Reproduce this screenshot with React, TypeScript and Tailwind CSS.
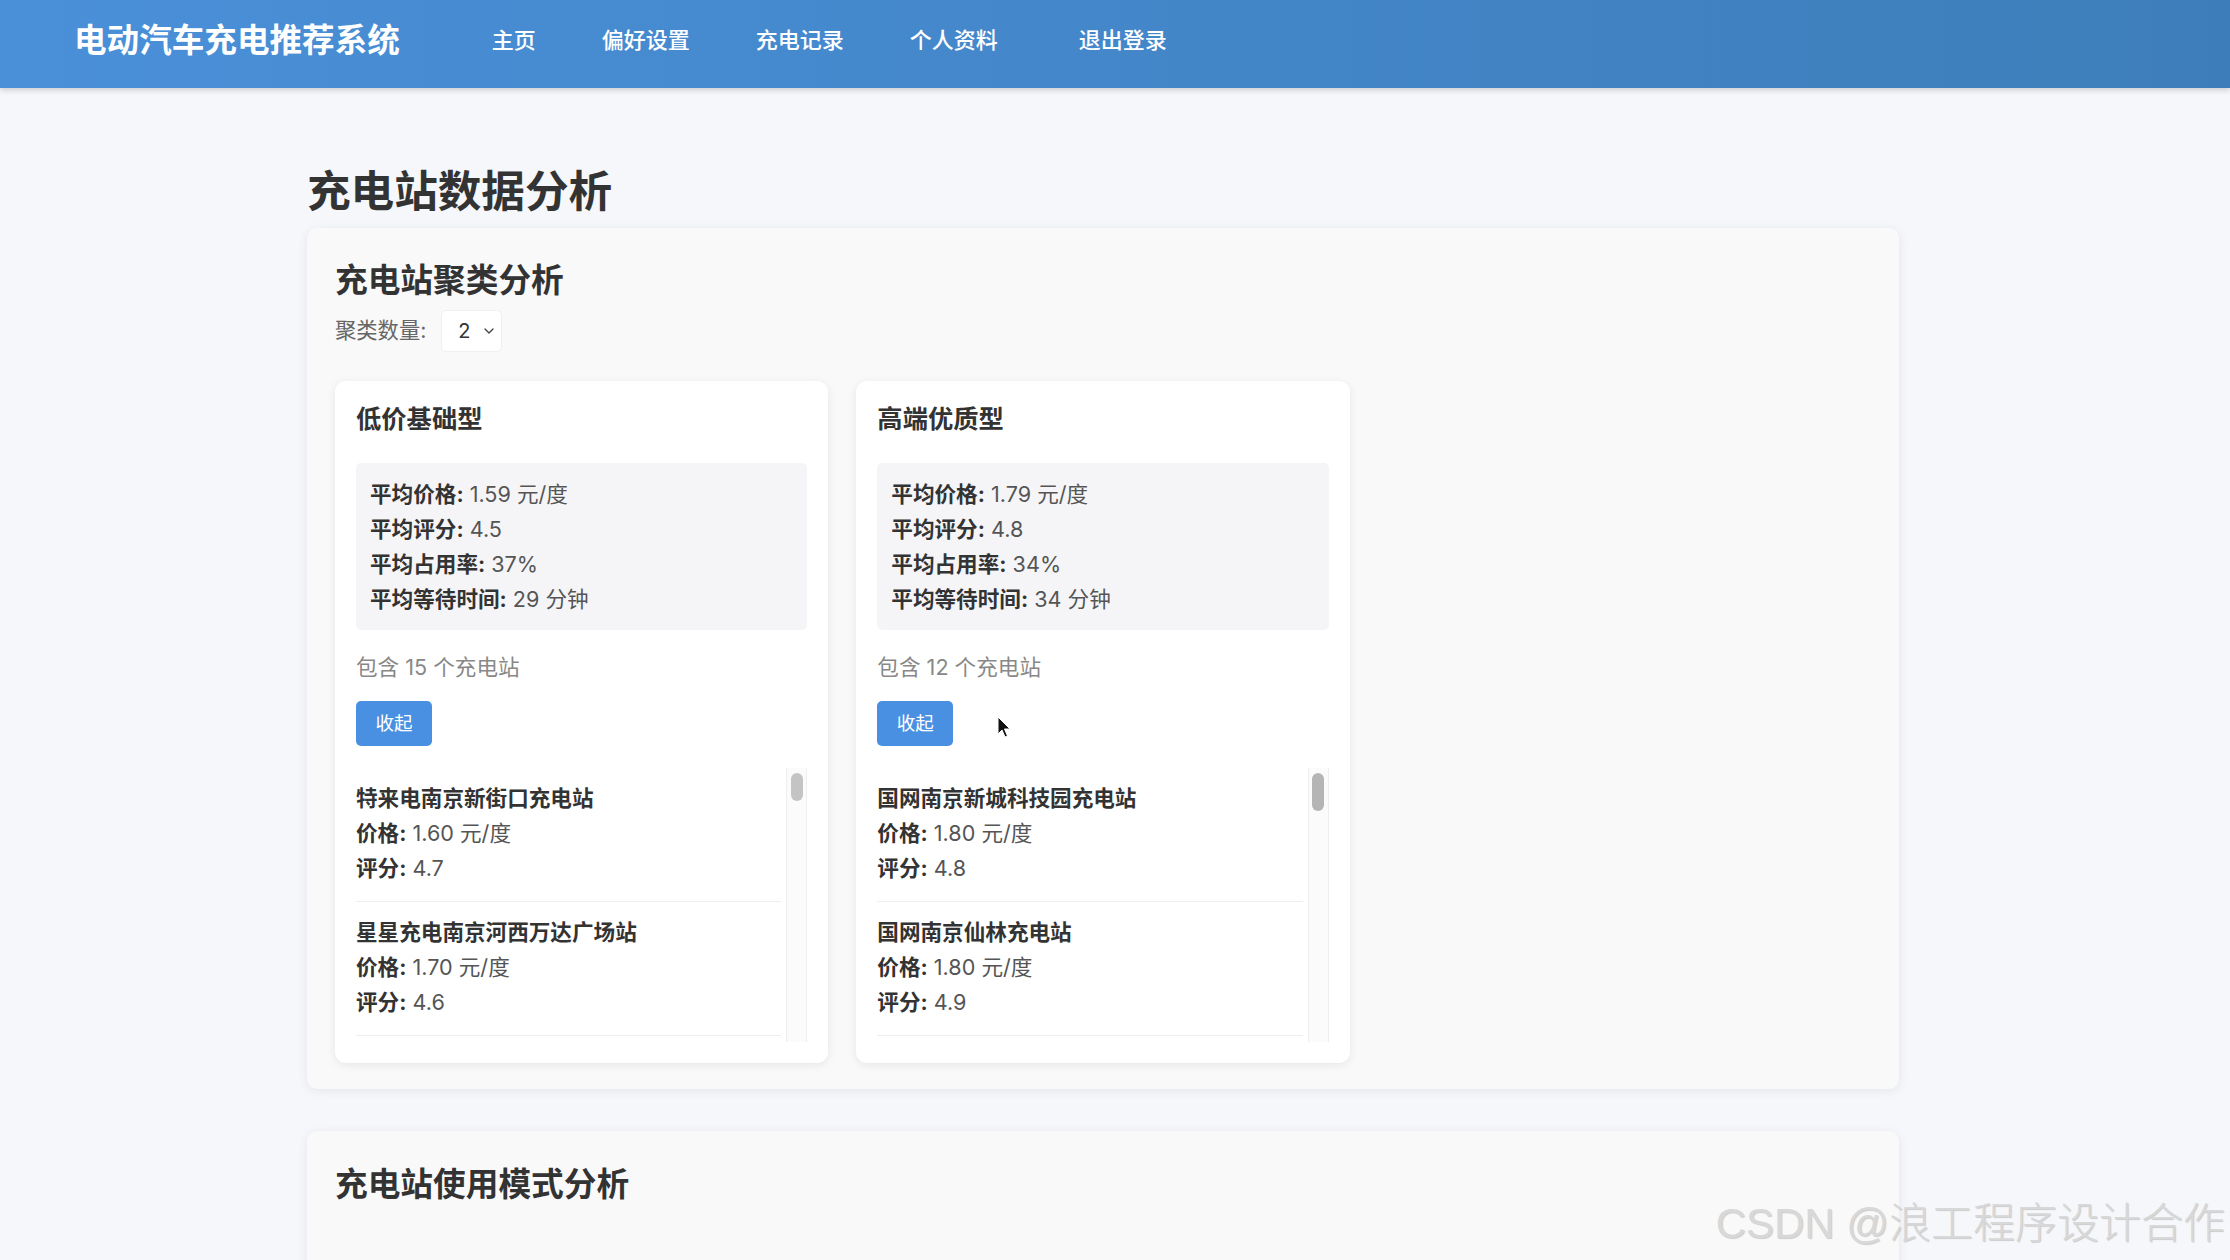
import { ChevronDown } from 'lucide-react';

type Station = { name: string; price: string; rating: string };

type Cluster = {
  title: string;
  price: string;
  rating: string;
  occupancy: string;
  wait: string;
  thumb: number;
  thumbColor: string;
  stations: Station[];
};

const clusters: Cluster[] = [
  {
    title: '低价基础型',
    price: '1.59',
    rating: '4.5',
    occupancy: '37%',
    wait: '29',
    thumb: 28,
    thumbColor: '#c4c4c4',
    stations: [
      { name: '特来电南京新街口充电站', price: '1.60', rating: '4.7' },
      { name: '星星充电南京河西万达广场站', price: '1.70', rating: '4.6' },
      { name: '特来电南京夫子庙充电站', price: '1.55', rating: '4.5' },
      { name: '星星充电南京江宁万达站', price: '1.50', rating: '4.4' },
      { name: '云快充南京河西中央公园站', price: '1.65', rating: '4.6' },
      { name: '特来电南京南站充电站', price: '1.58', rating: '4.3' },
      { name: '星星充电南京鼓楼广场站', price: '1.62', rating: '4.5' },
      { name: '小桔充电南京玄武湖站', price: '1.55', rating: '4.4' },
      { name: '特来电南京浦口充电站', price: '1.52', rating: '4.6' },
      { name: '云快充南京雨花台站', price: '1.60', rating: '4.5' },
      { name: '星星充电南京栖霞站', price: '1.56', rating: '4.4' },
      { name: '小桔充电南京百家湖站', price: '1.63', rating: '4.6' },
      { name: '特来电南京秦淮充电站', price: '1.58', rating: '4.5' },
      { name: '云快充南京江北新区站', price: '1.54', rating: '4.3' },
      { name: '星星充电南京奥体中心站', price: '1.61', rating: '4.7' },
    ],
  },
  {
    title: '高端优质型',
    price: '1.79',
    rating: '4.8',
    occupancy: '34%',
    wait: '34',
    thumb: 38,
    thumbColor: '#b5b5b5',
    stations: [
      { name: '国网南京新城科技园充电站', price: '1.80', rating: '4.8' },
      { name: '国网南京仙林充电站', price: '1.80', rating: '4.9' },
      { name: '蔚来南京紫峰大厦换电站', price: '1.85', rating: '4.9' },
      { name: '国网南京江宁大学城站', price: '1.75', rating: '4.7' },
      { name: '特斯拉南京德基广场超充站', price: '1.90', rating: '4.9' },
      { name: '国网南京麒麟科创园站', price: '1.78', rating: '4.8' },
      { name: '蔚来南京河西换电站', price: '1.82', rating: '4.8' },
      { name: '国网南京软件谷充电站', price: '1.76', rating: '4.7' },
      { name: '特斯拉南京新街口超充站', price: '1.88', rating: '4.9' },
      { name: '国网南京南部新城站', price: '1.74', rating: '4.8' },
      { name: '小鹏南京江宁超充站', price: '1.79', rating: '4.8' },
      { name: '国网南京燕子矶站', price: '1.72', rating: '4.7' },
    ],
  },
];

const navItems = ['主页', '偏好设置', '充电记录', '个人资料'];

function ClusterCard({ cluster }: { cluster: Cluster }) {
  return (
    <div className="rounded-[11px] bg-white px-[21px] pt-[21px] pb-[21px] shadow-[0_2px_10px_rgba(0,0,0,0.08)]">
      <h3 className="text-[25.3px] font-bold leading-[34px] text-[#333]">{cluster.title}</h3>

      <div className="mt-[27px] rounded-[5px] bg-[#f5f5f7] px-[14px] py-[13.5px] text-[21.6px] leading-[35px] text-[#555]">
        <p>
          <span className="font-bold text-[#333]">平均价格:</span> {cluster.price} 元/度
        </p>
        <p>
          <span className="font-bold text-[#333]">平均评分:</span> {cluster.rating}
        </p>
        <p>
          <span className="font-bold text-[#333]">平均占用率:</span> {cluster.occupancy}
        </p>
        <p>
          <span className="font-bold text-[#333]">平均等待时间:</span> {cluster.wait} 分钟
        </p>
      </div>

      <p className="mt-[20px] text-[21.6px] leading-[35px] text-[#888]">包含 {cluster.stations.length} 个充电站</p>

      <button
        type="button"
        className="mt-[16px] h-[45px] w-[76px] rounded-[5px] bg-[#4a90e2] text-[18.5px] text-white"
      >
        收起
      </button>

      <div className="relative mt-[22px] h-[274px] overflow-hidden">
        <div className="h-full pr-[26px]">
          {cluster.stations.map((s) => (
            <div key={s.name} className="border-b border-[#eee] pt-[13px] pb-[15px] text-[21.6px] leading-[35px] text-[#555]">
              <p className="font-bold text-[#333]">{s.name}</p>
              <p>
                <span className="font-bold text-[#333]">价格:</span> {s.price} 元/度
              </p>
              <p>
                <span className="font-bold text-[#333]">评分:</span> {s.rating}
              </p>
            </div>
          ))}
        </div>
        {/* scrollbar */}
        <div className="absolute right-0 top-0 h-full w-[21px] border-x border-[#eeeeee] bg-[#fbfbfb] pt-[5px]">
          <div className="mx-auto w-[12px] rounded-full" style={{ height: cluster.thumb, backgroundColor: cluster.thumbColor }} />
        </div>
      </div>
    </div>
  );
}

export default function App() {
  return (
    <div className="relative h-[1260px] overflow-hidden bg-[#f5f7fa] font-['Inter','Noto_Sans_CJK_SC',sans-serif]">
      <header className="relative z-10 flex h-[88px] items-center bg-linear-to-r from-[#4a90d9] to-[#3d7eba] pb-[8px] pl-[74px] shadow-[0_2px_6px_rgba(0,0,0,0.18)]">
        <div className="text-[32.6px] font-bold leading-none text-white">电动汽车充电推荐系统</div>
        <nav className="ml-[92px] flex items-center gap-[66px] text-[22px] font-medium text-white">
          {navItems.map((item) => (
            <a key={item} href="#" className="leading-none">
              {item}
            </a>
          ))}
          <a href="#" className="ml-[15px] leading-none">
            退出登录
          </a>
        </nav>
      </header>

      <main className="pl-[307px] pt-[78px]">
        <div className="w-[1592px]">
          <h1 className="mb-[10px] text-[43.6px] font-bold leading-[52px] text-[#333]">充电站数据分析</h1>

          <section className="rounded-[10px] bg-[#f9f9f9] px-[28px] pt-[32px] pb-[26px] shadow-[0_2px_12px_rgba(0,0,0,0.07)]">
            <h2 className="text-[32.7px] font-bold leading-[40px] text-[#333]">充电站聚类分析</h2>
            <div className="mt-[10px] flex items-center gap-[15px]">
              <label className="text-[21.3px] text-[#666]">聚类数量:</label>
              <div className="relative h-[42px] w-[61px]">
                <select
                  defaultValue="2"
                  className="h-full w-full appearance-none rounded-[5px] border border-[#f0f0f0] bg-white pl-[16px] text-[20px] text-[#333] outline-none"
                >
                  <option value="2">2</option>
                  <option value="3">3</option>
                  <option value="4">4</option>
                  <option value="5">5</option>
                </select>
                <ChevronDown className="pointer-events-none absolute right-[5px] top-[13px] h-[16px] w-[16px] text-[#444]" strokeWidth={2} />
              </div>
            </div>

            <div className="mt-[29px] grid grid-cols-3 items-start gap-[28px]">
              {clusters.map((c) => (
                <ClusterCard key={c.title} cluster={c} />
              ))}
            </div>
          </section>

          <section className="mt-[42px] h-[400px] rounded-[10px] bg-[#f9f9f9] px-[28px] pt-[33px] shadow-[0_2px_12px_rgba(0,0,0,0.07)]">
            <h2 className="text-[32.7px] font-bold leading-[40px] text-[#333]">充电站使用模式分析</h2>
          </section>
        </div>
      </main>

      {/* mouse pointer */}
      <svg className="absolute left-[997px] top-[716px]" width="14" height="23" viewBox="0 0 14 23">
        <path d="M1 1 L1 18 L5 14 L8 21 L10.5 20 L7.5 13 L13 13 Z" fill="#111" stroke="#fff" strokeWidth="1" strokeLinejoin="round" />
      </svg>

      <div className="absolute right-[5px] bottom-[11px] font-['Liberation_Sans','Noto_Sans_CJK_SC',sans-serif] text-[42px] font-light leading-[50px] text-[#d8d8d8] [text-shadow:1px_1px_1px_rgba(0,0,0,0.18)]">
        CSDN @浪工程序设计合作
      </div>
    </div>
  );
}
